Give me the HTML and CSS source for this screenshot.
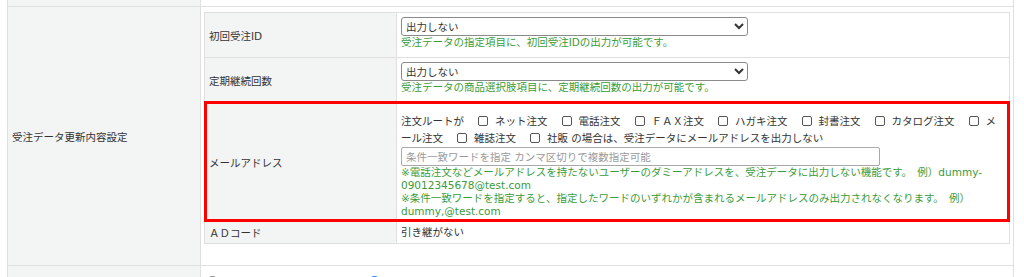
FILE: index.html
```html
<!DOCTYPE html>
<html lang="ja">
<head>
  <meta charset="UTF-8">
  <meta name="viewport" content="width=device-width, initial-scale=1.0">
  <title>受注データ更新内容設定</title>
  <link rel="stylesheet" href="styles.css">
</head>
<body>

  <table class="settings">
    <tr class="cut">
      <th></th>
      <td></td>
    </tr>
    <tr>
      <th>受注データ更新内容設定</th>
      <td class="value">
        <div class="sub">
          <div class="sub-row">
            <div class="sub-label">初回受注ID</div>
            <div class="sub-value">
              <select class="pick">
                <option>出力しない</option>
                <option>出力する</option>
              </select>
              <div class="note">受注データの指定項目に、初回受注IDの出力が可能です。</div>
            </div>
          </div>
          <div class="sub-row">
            <div class="sub-label">定期継続回数</div>
            <div class="sub-value">
              <select class="pick">
                <option>出力しない</option>
                <option>出力する</option>
              </select>
              <div class="note">受注データの商品選択肢項目に、定期継続回数の出力が可能です。</div>
            </div>
          </div>
          <!-- marked row -->
          <div class="sub-row marked">
            <div class="sub-label">メールアドレス</div>
            <div class="sub-value mail">
              <div class="routes">注文ルートが<label><input type="checkbox" class="chk">ネット注文</label><label><input type="checkbox" class="chk">電話注文</label><label><input type="checkbox" class="chk">ＦＡＸ注文</label><label><input type="checkbox" class="chk">ハガキ注文</label><label><input type="checkbox" class="chk">封書注文</label><label><input type="checkbox" class="chk">カタログ注文</label><label><input type="checkbox" class="chk">メール注文</label><label><input type="checkbox" class="chk">雑誌注文</label><label><input type="checkbox" class="chk">社販</label> の場合は、受注データにメールアドレスを出力しない</div>
              <input type="text" class="words" placeholder="条件一致ワードを指定 カンマ区切りで複数指定可能">
              <div class="note">※電話注文などメールアドレスを持たないユーザーのダミーアドレスを、受注データに出力しない機能です。　例）dummy-09012345678@test.com</div>
              <div class="note">※条件一致ワードを指定すると、指定したワードのいずれかが含まれるメールアドレスのみ出力されなくなります。　例）dummy,@test.com</div>
            </div>
          </div>
          <div class="sub-row">
            <div class="sub-label">ＡＤコード</div>
            <div class="sub-value plain">引き継がない</div>
          </div>
        </div>
      </td>
    </tr>
    <tr class="next">
      <th>受注サイト別設定</th>
      <td>
        <label class="radio"><input type="radio" name="site">サイト別に設定しない</label>
        <label class="radio"><input type="radio" name="site" checked>サイト別に設定する</label>
      </td>
    </tr>
  </table>

</body>
</html>
```

FILE: styles.css
```css
body {
  margin: 0;
  background-color: #fff;
  font-family: "DejaVu Sans", "Noto Sans CJK JP", sans-serif;
  font-size: 10.5px;
  color: #333;
}

.settings {
  border-collapse: collapse;
  table-layout: fixed;
  width: 1007px;
  margin-left: 7px;
}

.settings th,
.settings td {
  border: 1px solid #dfdfdf;
  padding: 0;
}

.settings th {
  width: 188px;
  padding-left: 4px;
  background-color: #f3f4f4;
  text-align: left;
  font-weight: normal;
  vertical-align: middle;
}

.settings tr.cut th,
.settings tr.cut td {
  border-top: none;
  height: 6px;
}

.settings td.value {
  padding: 5px 3px 21px 3px;
}

/* inner table */
.sub {
  border: 1px solid #dfdfdf;
}

.sub-row {
  display: grid;
  grid-template-columns: 192px 1fr;
}

.sub-row + .sub-row {
  border-top: 1px solid #dfdfdf;
}

.sub-row.marked {
  position: relative;
  z-index: 1;
  outline: 3px solid #f00;
  outline-offset: -2px;
}

.sub-label {
  box-sizing: border-box;
  display: flex;
  align-items: center;
  padding: 0 4px;
  background-color: #f3f4f4;
  border-right: 1px solid #dfdfdf;
}

.sub-value {
  padding: 4px 4px 8px;
}

.sub-value.mail {
  padding: 10px 4px 3px;
}

.sub-value.plain {
  padding: 4px;
  line-height: 13px;
}

.pick {
  display: block;
  width: 347px;
  height: 19px;
  font: inherit;
  color: #333;
  border: 1px solid #8a8a8a;
  border-radius: 3px;
  background-color: #fff;
}

.note {
  color: #3a9b3a;
  line-height: 13px;
}

.routes {
  line-height: 17px;
}

.chk {
  appearance: none;
  box-sizing: border-box;
  width: 10px;
  height: 10px;
  margin: 0 7px 0 14px;
  border: 1px solid #555;
  border-radius: 2px;
  background-color: #fff;
  vertical-align: -1px;
}

.words {
  display: block;
  box-sizing: border-box;
  width: 479px;
  height: 19px;
  margin: 0;
  padding: 0 4px;
  font: inherit;
  border: 1px solid #a9a9a9;
  border-radius: 2px;
}

.words::placeholder {
  color: #9a9a9a;
}

.settings tr.next th,
.settings tr.next td {
  padding-top: 9px;
  padding-bottom: 7px;
  vertical-align: top;
}

.radio {
  margin-right: 30px;
}

.radio input {
  margin: 0 6px 0 5px;
  vertical-align: -2px;
}
```
